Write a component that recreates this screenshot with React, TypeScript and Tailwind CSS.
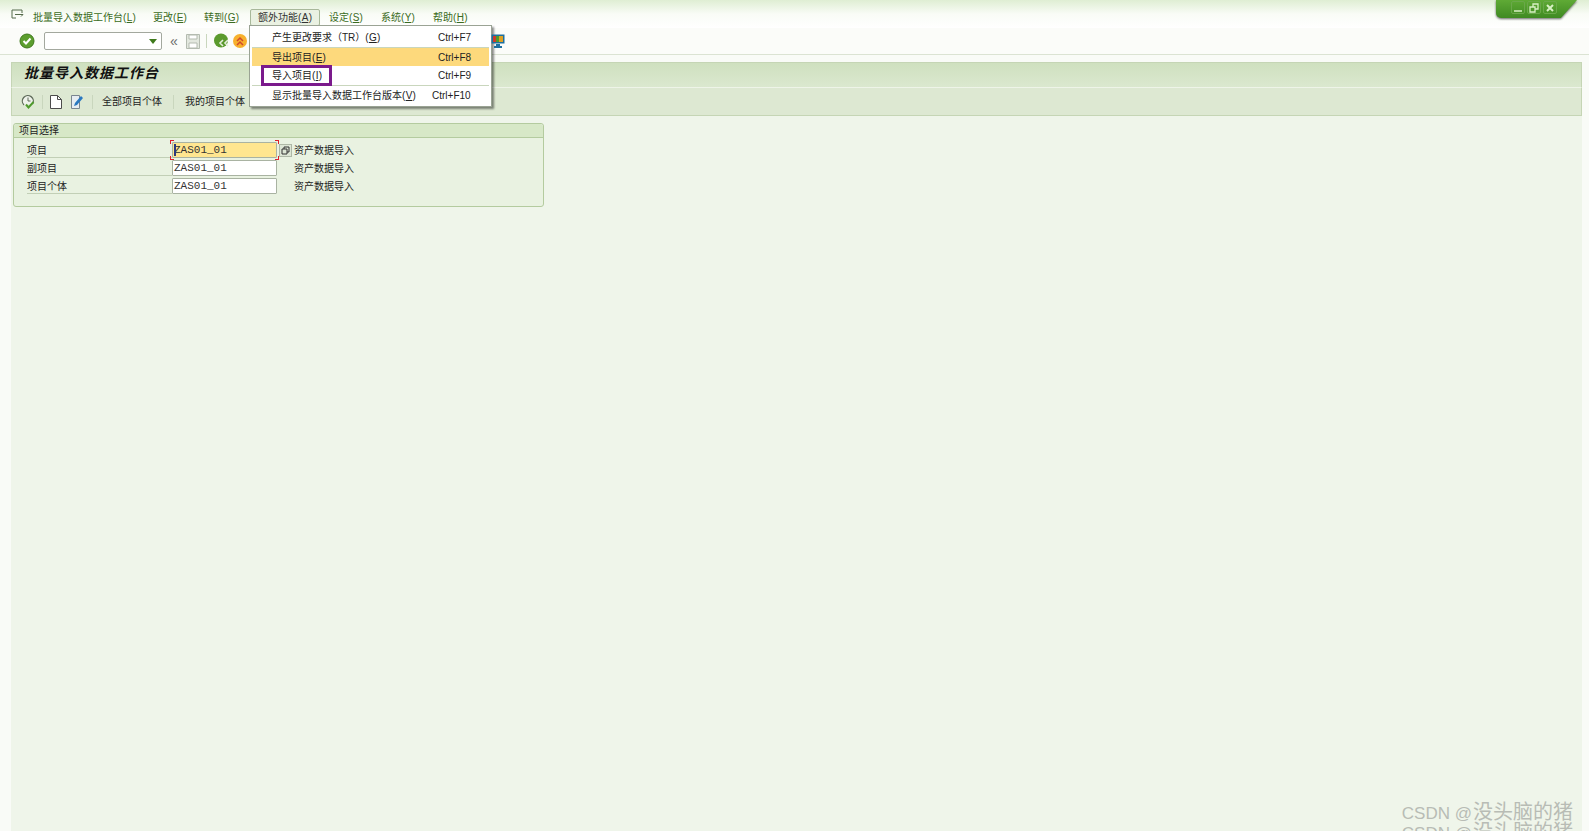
import { ReactNode } from "react";

const cjk = "font-['Liberation_Sans','Noto_Sans_CJK_SC',sans-serif]";

const menus = [
  { label: "批量导入数据工作台", key: "L", width: "w-[120px]" },
  { label: "更改", key: "E", width: "w-[51px]" },
  { label: "转到", key: "G", width: "w-[46px]" },
];
const menusAfter = [
  { label: "设定", key: "S" },
  { label: "系统", key: "Y" },
  { label: "帮助", key: "H" },
];

const fields = [
  { label: "项目", value: "ZAS01_01", active: true },
  { label: "副项目", value: "ZAS01_01", active: false },
  { label: "项目个体", value: "ZAS01_01", active: false },
];

// label with its underlined access key, like (E)
const Hot = ({ label, k }: { label: string; k: string }) => (
  <span className="whitespace-nowrap">
    {label}(<span className="underline underline-offset-1 px-[0.3px]">{k}</span>)
  </span>
);

const Divider = () => <div className="w-px h-[14px] bg-[#c9d6bd]" />;

const OkIcon = () => (
  <svg width="16" height="16" viewBox="0 0 16 16">
    <circle cx="8" cy="8" r="7" fill="#5c9e2e" stroke="#3f7a1c" />
    <path d="M4.5 8l2.5 2.5 4.5-5" fill="none" stroke="#fff" strokeWidth="2" />
  </svg>
);

const BackIcon = () => (
  <svg width="16" height="16" viewBox="0 0 16 16">
    <circle cx="7" cy="7.5" r="7" fill="#5b9a2d" />
    <path d="M9 7l-3 3 3 3M14 7l-3 3 3 3" fill="none" stroke="#e6eedd" strokeWidth="1.6" />
  </svg>
);

const ExitIcon = () => (
  <svg width="16" height="16" viewBox="0 0 16 16">
    <circle cx="8" cy="8" r="7" fill="#f7b02c" />
    <path d="M5 8l3-3 3 3M5 12l3-3 3 3" fill="none" stroke="#d0492b" strokeWidth="1.5" />
  </svg>
);

const SaveIcon = () => (
  <svg width="14" height="16" viewBox="0 0 14 16">
    <path d="M.5 1.5h13v14H.5z" fill="#e3e8df" stroke="#b4bbb0" />
    <path d="M3 2h8v4H3zM3 10h8v5H3z" fill="#fff" stroke="#b4bbb0" />
  </svg>
);

const ClockCheckIcon = () => (
  <svg width="15" height="15" viewBox="0 0 15 15">
    <path d="M3 11a5.5 5.5 0 1 1 8.5-1" fill="#eef2ea" stroke="#5f6b5a" strokeWidth="1.3" />
    <path d="M7 3.5V7h2.5" fill="none" stroke="#5f6b5a" />
    <path d="M5 10.5l2.5 3 5-5.5" fill="none" stroke="#4f9a2c" strokeWidth="2" />
  </svg>
);

const PageIcon = () => (
  <svg width="12" height="14" viewBox="0 0 12 14">
    <path d="M.5.5h7l4 4v9H.5z" fill="#fff" stroke="#4c4c4c" />
    <path d="M7.5.5v4h4" fill="none" stroke="#4c4c4c" />
  </svg>
);

const EditIcon = () => (
  <svg width="13" height="14" viewBox="0 0 13 14">
    <path d="M.5.5h8v13h-8z" fill="#e6ecf2" stroke="#7a8590" />
    <path d="M3 11l1-3 6-7 2 2-6 7z" fill="#2a78c0" />
  </svg>
);

const MonitorIcon = () => (
  <svg width="14" height="14" viewBox="0 0 14 14">
    <path d="M.5.5h13v9H.5z" fill="#1e6f9f" />
    <path d="M2 2h3v6H2z" fill="#d03a2c" />
    <path d="M5 2h3v6H5z" fill="#4f9a2c" />
    <path d="M8 2h4v6H8z" fill="#e0a020" />
    <path d="M5 10h4v2h2v2H3v-2h2z" fill="#1e6f9f" />
  </svg>
);

const WindowButton = ({ children }: { children: ReactNode }) => (
  <div className="flex items-center justify-center w-[14px] h-[13px] rounded-[2px] border border-[#6aa84a]">
    <svg width="10" height="10" viewBox="0 0 10 10" fill="none" stroke="#d8f0c4" strokeWidth="1.3">
      {children}
    </svg>
  </div>
);

const MenuRow = ({
  label,
  k,
  shortcut,
  highlighted,
}: {
  label: string;
  k: string;
  shortcut: string;
  highlighted?: boolean;
}) => (
  <div className={`flex items-center h-[18px] pl-[20px] ${highlighted ? "bg-[#fdd97c]" : ""}`}>
    <span className="flex-1">
      <Hot label={label} k={k} />
    </span>
    <span className="w-[34px] mr-[17px] whitespace-nowrap">{shortcut}</span>
  </div>
);

export default function App() {
  return (
    <div className={`${cjk} relative w-[1589px] h-[831px] overflow-hidden bg-[#f9fbf7] text-[10px] text-[#222]`}>
      {/* menu bar */}
      <div className="flex items-center h-[28px] pt-[6px] pl-[11px] bg-gradient-to-b from-[#dfeed3] via-[#f9fcf6] to-white text-[#3a6b22]">
        <svg width="13" height="12" viewBox="0 0 13 12" className="mr-[9px] -mt-[4px]" fill="none" stroke="#556b4a">
          <path d="M11 4V1H1v8h4M4 5.5h8l-2 2" />
        </svg>
        {menus.map((m) => (
          <span key={m.label} className={m.width}>
            <Hot label={m.label} k={m.key} />
          </span>
        ))}
        <span className="flex items-center justify-center w-[70px] h-[17px] rounded-[2px] border border-[#a8b89a] bg-[#eaf1e2] text-[#333]">
          <Hot label="额外功能" k="A" />
        </span>
        <div className="flex ml-[9px] gap-[17px]">
          {menusAfter.map((m) => (
            <span key={m.label} className="w-[35px]">
              <Hot label={m.label} k={m.key} />
            </span>
          ))}
        </div>
      </div>

      {/* system toolbar */}
      <div className="flex items-center h-[27px] pl-[19px] bg-[#fbfcf9] border-b border-[#dbe3d3]">
        <OkIcon />
        <div className="flex items-center justify-end w-[118px] h-[18px] ml-[9px] pr-[4px] bg-white border border-[#a3a89e] rounded-[2px]">
          <div className="w-0 h-0 border-x-[4px] border-x-transparent border-t-[5px] border-t-[#3f7a1c]" />
        </div>
        <span className="ml-[8px] mr-[8px] text-[14px] leading-none text-[#6b6b6b]">«</span>
        <SaveIcon />
        <div className="w-px h-[14px] ml-[6px] mr-[7px] bg-[#c9d6bd]" />
        <BackIcon />
        <div className="ml-[2px]">
          <ExitIcon />
        </div>
      </div>

      {/* screen */}
      <div className="pl-[11px] pr-[7px] pt-[7px] h-[776px]">
        <div className="h-full bg-[#eff5ea]">
          <div className="flex items-center h-[25px] pl-[12px] border border-b-0 border-[#c5d5b5] bg-gradient-to-b from-[#cfe0bf] to-[#dbe8cf]">
            <span className="text-[14px] font-bold italic tracking-[1px] text-[#111] -mt-[3px]">批量导入数据工作台</span>
          </div>
          <div className="flex items-center h-[29px] pl-[9px] bg-[#dde8d2] border border-t-[#eef4e8] border-[#c5d5b5] text-[#222]">
            <ClockCheckIcon />
            <div className="w-px h-[14px] ml-[6px] mr-[7px] bg-[#c9d6bd]" />
            <PageIcon />
            <div className="ml-[9px]">
              <EditIcon />
            </div>
            <div className="ml-[8px] mr-[9px]">
              <Divider />
            </div>
            <span className="whitespace-nowrap">全部项目个体</span>
            <div className="mx-[11px]">
              <Divider />
            </div>
            <span className="whitespace-nowrap">我的项目个体</span>
          </div>

          {/* group box */}
          <div className="w-[531px] h-[84px] ml-[2px] mt-[7px] rounded-[3px] border border-[#b4cb9f] bg-[#e9f2e1]">
            <div className="flex items-center h-[14px] pl-[5px] bg-[#d7e8c7] border-b border-[#b4cb9f] rounded-t-[3px] text-[#222]">
              项目选择
            </div>
            <div className="flex flex-col gap-[2px] pt-[4px] pl-[13px]">
              {fields.map((f) => (
                <div key={f.label} className="flex items-center h-[16px]">
                  <span className="w-[145px] h-[16px] leading-[17px] border-b border-[#c2cfb6]">{f.label}</span>
                  <div className="relative">
                    <div
                      className={`w-[105px] h-[16px] pl-[1px] border border-[#a9b3a2] rounded-[1px] font-['Liberation_Mono',monospace] text-[11px] leading-[15px] text-[#333] ${
                        f.active ? "bg-[#ffe690]" : "bg-white"
                      }`}
                    >
                      {f.active && <div className="absolute left-[2px] top-[2px] w-[2px] h-[12px] bg-[#2b3a80]" />}
                      {f.value}
                    </div>
                    {f.active && (
                      <>
                        <div className="absolute -left-[2px] -top-[2px] w-[4px] h-[4px] border-l border-t border-[#e0202a]" />
                        <div className="absolute -right-[2px] -top-[2px] w-[4px] h-[4px] border-r border-t border-[#e0202a]" />
                        <div className="absolute -left-[2px] -bottom-[2px] w-[4px] h-[4px] border-l border-b border-[#e0202a]" />
                        <div className="absolute -right-[2px] -bottom-[2px] w-[4px] h-[4px] border-r border-b border-[#e0202a]" />
                      </>
                    )}
                  </div>
                  <div className="flex items-center justify-center w-[14px] h-[14px] ml-[1px]">
                    {f.active && (
                      <svg width="13" height="13" viewBox="0 0 13 13" fill="none">
                        <rect x=".5" y=".5" width="12" height="12" fill="#dde6d5" stroke="#aeb8a6" />
                        <path d="M3 5h5v5H3zM5 5V3h5v5H8" stroke="#333" />
                      </svg>
                    )}
                  </div>
                  <span className="ml-[2px] whitespace-nowrap">资产数据导入</span>
                </div>
              ))}
            </div>
          </div>
        </div>
      </div>

      {/* window buttons */}
      <div className="absolute right-[12px] top-0 drop-shadow-[0_1px_1px_rgba(0,0,0,0.6)]">
        <div className="flex items-start gap-[2px] w-[81px] h-[18px] pl-[15px] pt-[1px] bg-gradient-to-b from-[#5faa35] to-[#3f8a22] rounded-bl-[5px] [clip-path:polygon(0_0,100%_0,80%_100%,0_100%)]">
          <WindowButton>
            <path d="M1 8h8" />
          </WindowButton>
          <WindowButton>
            <path d="M1 4h5v5H1zM4 4V1h5v5H6" />
          </WindowButton>
          <WindowButton>
            <path d="M2 2l6 6M8 2l-6 6" strokeWidth="2" />
          </WindowButton>
        </div>
      </div>

      {/* open dropdown */}
      <div className="absolute left-[249px] top-[25px] w-[243px] h-[82px] p-[2px] bg-white border border-[#9aa394] shadow-[2px_2px_2px_rgba(0,0,0,0.45)] text-[#222]">
        <MenuRow label="产生更改要求（TR）" k="G" shortcut="Ctrl+F7" />
        <div className="h-px my-[1px] bg-[#c9d6bd]" />
        <div className="-mt-[1px]">
          <MenuRow label="导出项目" k="E" shortcut="Ctrl+F8" highlighted />
        </div>
        <MenuRow label="导入项目" k="I" shortcut="Ctrl+F9" />
        <div className="h-px mt-[1px] bg-[#c9d6bd]" />
        <div className="flex items-center h-[18px] pl-[20px]">
          <span className="flex-1">
            <Hot label="显示批量导入数据工作台版本" k="V" />
          </span>
          <span className="w-[40px] mr-[17px] whitespace-nowrap">Ctrl+F10</span>
        </div>
        {/* purple annotation box */}
        <div className="absolute left-[11px] top-[39px] w-[71px] h-[21px] border-[3px] border-[#7b1a8c]" />
      </div>

      <div className="absolute left-[491px] top-[34px]">
        <MonitorIcon />
      </div>

      {/* watermark */}
      <div className="absolute right-[16px] top-[803px] text-[20px] leading-[19px] text-[#b8bcb5] whitespace-nowrap">
        <div>
          <span className="text-[17px] mr-[1px]">CSDN @</span>没头脑的猪
        </div>
        <div>
          <span className="text-[17px] mr-[1px]">CSDN @</span>没头脑的猪
        </div>
      </div>
    </div>
  );
}
